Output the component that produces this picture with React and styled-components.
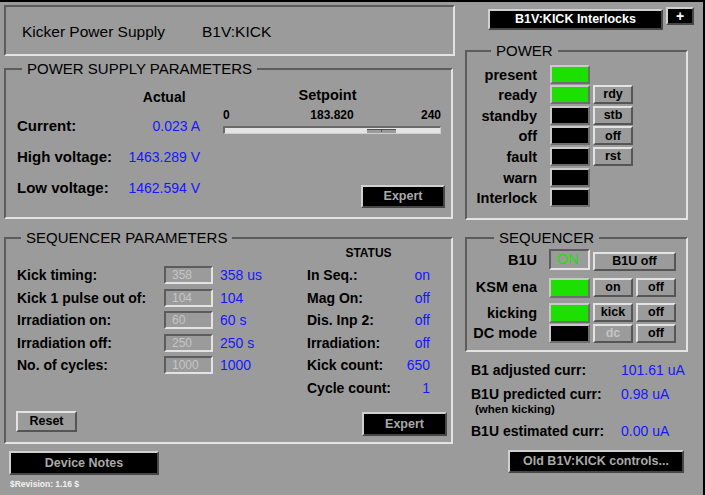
import styled, { createGlobalStyle } from "styled-components";

const bg = "#9b9b9b";
const dark = "#5c5c5c";
const light = "#e3e3e3";
const blue = "#1616ff";
const green = "#1ee000";

const GlobalStyle = createGlobalStyle`
  body { margin: 0; background: ${bg}; }
`;

const Screen = styled.div`
  width: 705px;
  height: 495px;
  box-sizing: border-box;
  border-top: 2px solid #000;
  border-right: 2px solid #000;
  background: ${bg};
  padding: 3px 0 0 4px;
  display: grid;
  grid-template-columns: 451px 231px;
  column-gap: 9px;
  align-items: start;
  font-family: "Liberation Sans", Arial, sans-serif;
  color: #000;
  overflow: hidden;
`;

const Column = styled.div`
  display: flex;
  flex-direction: column;
  align-items: flex-start;
`;

const HeaderBox = styled.div`
  width: 451px;
  height: 51px;
  box-sizing: border-box;
  border: 2px solid;
  border-color: ${dark} ${light} ${light} ${dark};
  display: flex;
  align-items: center;
  gap: 37px;
  padding: 3px 0 0 16px;
  font-size: 15.5px;
`;

const Group = styled.div`
  position: relative;
  box-sizing: border-box;
  width: ${(p) => p.$w}px;
  height: ${(p) => p.$h}px;
  margin-top: ${(p) => p.$mt || 0}px;
  margin-left: ${(p) => p.$ml || 0}px;
  border: 2px solid;
  border-color: ${dark} ${light} ${light} ${dark};
  display: flex;
  flex-direction: column;
`;

const Legend = styled.span`
  position: absolute;
  top: -9px;
  left: ${(p) => p.$x}px;
  padding: 0 5px;
  background: ${bg};
  font-size: 15px;
  line-height: 16px;
  white-space: nowrap;
`;

/* power supply parameters */
const PSBody = styled.div`
  flex: 1;
  display: flex;
  padding: 19px 0 9px 11px;
`;

const ReadoutGrid = styled.div`
  width: 183px;
  display: grid;
  grid-template-columns: 1fr auto;
  grid-template-rows: 21px repeat(3, 31px);
  align-items: center;
`;

const ColHead = styled.div`
  grid-column: ${(p) => p.$col || "auto"};
  justify-self: center;
  align-self: start;
  font-size: ${(p) => p.$size || 14}px;
  font-weight: bold;
  line-height: 16px;
`;

const Label = styled.div`
  font-size: ${(p) => p.$size || 14}px;
  font-weight: bold;
  line-height: 16px;
  white-space: nowrap;
`;

const Value = styled.div`
  color: ${blue};
  font-size: 14px;
  line-height: 16px;
  white-space: nowrap;
  justify-self: ${(p) => p.$align || "start"};
  padding-left: ${(p) => p.$pl || 0}px;
`;

const SetpointPanel = styled.div`
  margin-left: 23px;
  width: 223px;
  display: flex;
  flex-direction: column;
`;

const SetpointHead = styled.div`
  margin-top: -2px;
  padding-right: 14px;
  text-align: center;
  font-size: 14.5px;
  font-weight: bold;
  line-height: 16px;
`;

const Scale = styled.div`
  width: 218px;
  margin-top: 6px;
  display: grid;
  grid-template-columns: 1fr auto 1fr;
  font-size: 12px;
  font-weight: bold;
  line-height: 13px;
  span:last-child { text-align: right; }
`;

const Track = styled.div`
  position: relative;
  width: 218px;
  height: 8px;
  box-sizing: border-box;
  margin-top: 4px;
  background: #e4e4e4;
  border-style: solid;
  border-width: 2px 1px 1px 2px;
  border-color: #6a6a6a #cfcfcf #cfcfcf #6a6a6a;
`;

const Thumb = styled.div`
  position: absolute;
  top: 1px;
  width: 29px;
  height: 3px;
  background: #9a9a9a;
  border-top: 1px solid #505050;
  &::after {
    content: "";
    position: absolute;
    left: 14px;
    top: -1px;
    width: 1px;
    height: 3px;
    background: #505050;
  }
`;

const BlackButton = styled.button`
  box-sizing: border-box;
  width: ${(p) => p.$w}px;
  height: ${(p) => p.$h}px;
  margin: ${(p) => p.$m || "0"};
  padding: 0;
  background: #000;
  border: 2px solid;
  border-color: #d0d0d0 #474747 #474747 #d0d0d0;
  color: ${(p) => p.$fg || "#a9a9a9"};
  font-family: inherit;
  font-size: ${(p) => p.$size || 12.5}px;
  font-weight: bold;
  line-height: 1;
  white-space: nowrap;
  align-self: ${(p) => p.$self || "auto"};
`;

const GrayButton = styled.button`
  box-sizing: border-box;
  width: ${(p) => p.$w}px;
  height: ${(p) => p.$h}px;
  margin: ${(p) => p.$m || "0"};
  padding: 0;
  background: ${bg};
  border: 2px solid;
  border-color: ${light} #555 #555 ${light};
  color: ${(p) => p.$fg || "#000"};
  font-family: inherit;
  font-size: 12.5px;
  font-weight: bold;
  line-height: 1;
  grid-column: ${(p) => p.$span || "auto"};
  align-self: ${(p) => p.$self || "auto"};
`;

/* sequencer parameters */
const SeqGrid = styled.div`
  margin-left: 11px;
  width: 413px;
  display: grid;
  grid-template-columns: 147px 49px 94px 1fr auto;
  grid-template-rows: 25px repeat(6, 22.5px);
  align-items: center;
`;

const Cell = styled.div`
  grid-column: ${(p) => p.$c};
  grid-row: ${(p) => p.$r};
  justify-self: ${(p) => p.$j || "stretch"};
`;

const Field = styled.div`
  box-sizing: border-box;
  width: 49px;
  height: 18px;
  border: 2px solid;
  border-color: ${dark} ${light} ${light} ${dark};
  padding-left: 6px;
  color: #c6c6c6;
  font-size: 12px;
  line-height: 14px;
`;

const Status = styled.div`
  grid-column: 4 / 6;
  grid-row: 1;
  justify-self: center;
  font-size: 12px;
  font-weight: bold;
  line-height: 14px;
  padding-top: 2px;
`;

const BottomBar = styled.div`
  margin-top: auto;
  display: flex;
  justify-content: space-between;
  align-items: flex-end;
  padding: 0 4px 6px 10px;
`;

const Revision = styled.div`
  margin: 4px 0 0 6px;
  color: #f2f2f2;
  font-size: 8.5px;
  font-weight: bold;
  line-height: 10px;
`;

/* right column */
const TopRow = styled.div`
  display: flex;
  gap: 3px;
  margin-left: 24px;
  align-items: flex-start;
  height: 25px;
`;

const PowerGrid = styled.div`
  display: grid;
  grid-template-columns: 80px 40px 40px;
  column-gap: 3px;
  grid-auto-rows: 20.67px;
  align-items: start;
  padding-top: 12.5px;
`;

const RightLabel = styled.div`
  grid-column: 1;
  justify-self: end;
  padding-right: ${(p) => p.$pr ?? 10}px;
  font-size: 14.5px;
  font-weight: bold;
  line-height: ${(p) => p.$lh || 20}px;
  white-space: nowrap;
`;

const Lamp = styled.div`
  grid-column: 2;
  box-sizing: border-box;
  height: ${(p) => p.$h || 19}px;
  background: ${(p) => (p.$on ? green : "#000")};
  border: 2px solid;
  border-color: #c9c9c9 #6e6e6e #6e6e6e #c9c9c9;
`;

const TextLamp = styled.div`
  grid-column: 2;
  box-sizing: border-box;
  height: 21px;
  border: 2px solid;
  border-color: ${dark} ${light} ${light} ${dark};
  color: ${green};
  font-size: 14.5px;
  line-height: 17px;
  text-align: center;
  padding-right: 4px;
`;

const SeqRow = styled.div`
  display: grid;
  grid-template-columns: 79px 41px 40px 40px;
  column-gap: 3px;
  height: ${(p) => p.$h}px;
  margin-top: ${(p) => p.$mt}px;
  align-items: start;
`;

const Readouts = styled.div`
  margin-left: 7px;
  display: flex;
  flex-direction: column;
`;

const ReadRow = styled.div`
  display: grid;
  grid-template-columns: 150px auto;
  margin-top: ${(p) => p.$mt}px;
`;

const SubNote = styled.div`
  margin: 2px 0 0 4px;
  font-size: 11.5px;
  font-weight: bold;
  line-height: 11px;
`;

const params = [
  { label: "Kick timing:", set: "358", val: "358 us" },
  { label: "Kick 1 pulse out of:", set: "104", val: "104" },
  { label: "Irradiation on:", set: "60", val: "60 s" },
  { label: "Irradiation off:", set: "250", val: "250 s" },
  { label: "No. of cycles:", set: "1000", val: "1000" },
];

const statuses = [
  ["In Seq.:", "on"],
  ["Mag On:", "off"],
  ["Dis. Inp 2:", "off"],
  ["Irradiation:", "off"],
  ["Kick count:", "650"],
  ["Cycle count:", "1"],
];

const power = [
  { label: "present", on: true },
  { label: "ready", on: true, btn: "rdy" },
  { label: "standby", btn: "stb" },
  { label: "off", btn: "off" },
  { label: "fault", btn: "rst" },
  { label: "warn" },
  { label: "Interlock" },
];

const setpoint = { value: 183.82, min: 0, max: 240 };

export default function App() {
  const thumbLeft = ((setpoint.value - setpoint.min) / (setpoint.max - setpoint.min)) * (218 - 3 - 29);
  return (
    <Screen>
      <GlobalStyle />
      <Column>
        <HeaderBox>
          <span>Kicker Power Supply</span>
          <span>B1V:KICK</span>
        </HeaderBox>

        <Group $w={449} $h={151} $mt={12}>
          <Legend $x={16}>POWER SUPPLY PARAMETERS</Legend>
          <PSBody>
            <ReadoutGrid>
              <ColHead $col={2}>Actual</ColHead>
              <Label $size={15}>Current:</Label>
              <Value $align="end">0.023 A</Value>
              <Label $size={15}>High voltage:</Label>
              <Value $align="end">1463.289 V</Value>
              <Label $size={15}>Low voltage:</Label>
              <Value $align="end">1462.594 V</Value>
            </ReadoutGrid>
            <SetpointPanel>
              <SetpointHead>Setpoint</SetpointHead>
              <Scale>
                <span>{setpoint.min}</span>
                <span>{setpoint.value.toFixed(3)}</span>
                <span>{setpoint.max}</span>
              </Scale>
              <Track>
                <Thumb style={{ left: thumbLeft }} />
              </Track>
              <BlackButton $w={84} $h={23} $m="auto 1px 0 0" $self="flex-end">
                Expert
              </BlackButton>
            </SetpointPanel>
          </PSBody>
        </Group>

        <Group $w={449} $h={207} $mt={18}>
          <Legend $x={15}>SEQUENCER PARAMETERS</Legend>
          <SeqGrid>
            <Status>STATUS</Status>
            {params.map((p, i) => [
              <Cell key={p.label} $c={1} $r={i + 2}>
                <Label>{p.label}</Label>
              </Cell>,
              <Cell key={p.label + "f"} $c={2} $r={i + 2}>
                <Field>{p.set}</Field>
              </Cell>,
              <Cell key={p.label + "v"} $c={3} $r={i + 2}>
                <Value $pl={7}>{p.val}</Value>
              </Cell>,
            ])}
            {statuses.map(([l, v], i) => [
              <Cell key={l} $c={4} $r={i + 2}>
                <Label>{l}</Label>
              </Cell>,
              <Cell key={l + "v"} $c={5} $r={i + 2} $j="end">
                <Value>{v}</Value>
              </Cell>,
            ])}
          </SeqGrid>
          <BottomBar>
            <GrayButton $w={61} $h={21} $m="0 0 4px 0">Reset</GrayButton>
            <BlackButton $w={85} $h={24}>Expert</BlackButton>
          </BottomBar>
        </Group>

        <BlackButton $w={150} $h={24} $m="7px 0 0 5px">Device Notes</BlackButton>
        <Revision>$Revision: 1.16 $</Revision>
      </Column>

      <Column>
        <TopRow>
          <BlackButton $w={175} $h={21} $m="4px 0 0 0" $fg="#fff">
            B1V:KICK Interlocks
          </BlackButton>
          <BlackButton $w={28} $h={18} $m="2px 0 0 0" $fg="#fff" $size={14}>
            +
          </BlackButton>
        </TopRow>

        <Group $w={223} $h={170} $mt={20} $ml={1}>
          <Legend $x={24}>POWER</Legend>
          <PowerGrid>
            {power.map((r, i) => [
              <RightLabel key={r.label} style={{ gridRow: i + 1 }}>
                {r.label}
              </RightLabel>,
              <Lamp key={r.label + "l"} $on={r.on} style={{ gridRow: i + 1 }} />,
              r.btn && (
                <GrayButton key={r.label + "b"} $w={40} $h={19} style={{ gridRow: i + 1 }}>
                  {r.btn}
                </GrayButton>
              ),
            ])}
          </PowerGrid>
        </Group>

        <Group $w={223} $h={115} $mt={17} $ml={1}>
          <Legend $x={27}>SEQUENCER</Legend>
          <SeqRow $h={21} $mt={10}>
            <RightLabel $pr={9} $lh={22}>B1U</RightLabel>
            <TextLamp>ON</TextLamp>
            <GrayButton $w={83} $h={19} $span="3 / 5" $self="end">B1U off</GrayButton>
          </SeqRow>
          <SeqRow $h={20} $mt={8}>
            <RightLabel $pr={9} $lh={19}>KSM ena</RightLabel>
            <Lamp $on $h={20} />
            <GrayButton $w={40} $h={19}>on</GrayButton>
            <GrayButton $w={40} $h={19}>off</GrayButton>
          </SeqRow>
          <SeqRow $h={20} $mt={5}>
            <RightLabel $pr={9} $lh={20}>kicking</RightLabel>
            <Lamp $on $h={20} />
            <GrayButton $w={40} $h={19}>kick</GrayButton>
            <GrayButton $w={40} $h={19}>off</GrayButton>
          </SeqRow>
          <SeqRow $h={19} $mt={1}>
            <RightLabel $pr={9} $lh={19}>DC mode</RightLabel>
            <Lamp $h={19} />
            <GrayButton $w={40} $h={19} $fg="#c4c4c4">dc</GrayButton>
            <GrayButton $w={40} $h={19}>off</GrayButton>
          </SeqRow>
        </Group>

        <Readouts>
          <ReadRow $mt={10}>
            <Label>B1 adjusted curr:</Label>
            <Value>101.61 uA</Value>
          </ReadRow>
          <ReadRow $mt={8}>
            <Label>B1U predicted curr:</Label>
            <Value>0.98 uA</Value>
          </ReadRow>
          <SubNote>(when kicking)</SubNote>
          <ReadRow $mt={8}>
            <Label>B1U estimated curr:</Label>
            <Value>0.00 uA</Value>
          </ReadRow>
        </Readouts>

        <BlackButton $w={176} $h={23} $m="11px 0 0 44px">
          Old B1V:KICK controls...
        </BlackButton>
      </Column>
    </Screen>
  );
}
